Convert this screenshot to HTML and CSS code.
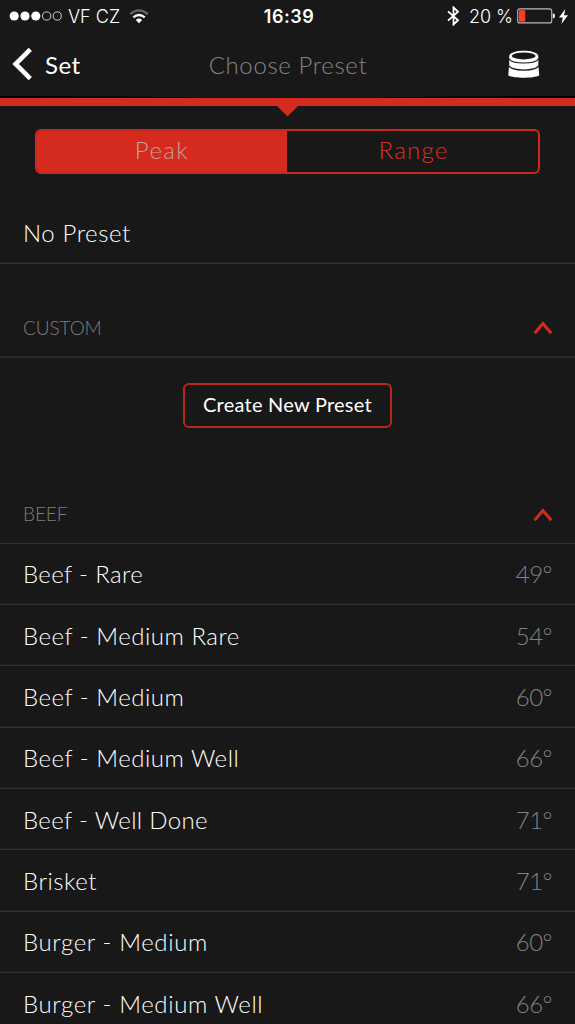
FILE: index.html
```html
<!DOCTYPE html>
<html lang="en">
<head>
<meta charset="utf-8">
<title>Choose Preset</title>
<link rel="stylesheet" href="styles.css">
</head>
<body>
<div class="screen">
  <header class="top">
    <div class="status">
      <div class="status-left">
        <svg class="signal" width="54" height="12" viewBox="0 0 54 12">
          <g fill="#fff"><circle cx="5.2" cy="6" r="4.6"/><circle cx="16" cy="6" r="4.6"/><circle cx="26.8" cy="6" r="4.6"/></g>
          <g fill="none" stroke="#ddd" stroke-width="0.9"><circle cx="37.6" cy="6" r="4.1"/><circle cx="48.2" cy="6" r="4.1"/></g>
        </svg>
        <span class="carrier">VF CZ</span>
        <svg class="wifi" width="20" height="15" viewBox="0 0 20 15">
          <path d="M1.2 5.2Q10 -2.4 18.8 5.2" fill="none" stroke="#666" stroke-width="2.3"/>
          <path d="M4.3 8.4Q10 3.6 15.7 8.4" fill="none" stroke="#fff" stroke-width="2.3"/>
          <path d="M6.8 10.9Q10 8 13.2 10.9L10 14.3Z" fill="#fff"/>
        </svg>
      </div>
      <div class="clock">16:39</div>
      <div class="status-right">
        <svg width="13" height="20" viewBox="0 0 13 20"><path d="M1 5.4L11 14.2L6.5 18.5V1.4L11 5.8L1 14.6" fill="none" stroke="#fff" stroke-width="1.8"/></svg>
        <span class="percent">20 %</span>
        <svg class="battery" width="38" height="16" viewBox="0 0 38 16">
          <rect x="0.7" y="0.9" width="34" height="14" rx="2" fill="none" stroke="#bbb" stroke-width="1.1"/>
          <rect x="2" y="2.2" width="6.2" height="11.4" fill="#ff3b2f"/>
          <path d="M35.8 5.3Q38 5.6 38 8T35.8 10.6Z" fill="#fff"/>
        </svg>
        <svg width="9" height="15" viewBox="0 0 9 15"><path d="M6.3 0L0 8.6H3.8L2.4 15L9 6.2H5Z" fill="#fff"/></svg>
      </div>
    </div>
    <nav class="nav">
      <div class="back">
        <svg width="20" height="34" viewBox="0 0 20 34"><path d="M18.3 2.3L3.6 17L18.3 31.7" fill="none" stroke="#fff" stroke-width="4.6"/></svg>
        <span class="back-label">Set</span>
      </div>
      <h1 class="title">Choose Preset</h1>
      <svg class="probe" width="32" height="28" viewBox="0 0 32 28">
        <path d="M1.2 6.2C1.2-1.2 30.3-1.2 30.3 6.2V17.5H30.6L31.2 25.4C25 28.4 6 28.4 0.3 25.4L0.9 17.5H1.2Z" fill="#fff"/>
        <ellipse cx="15.7" cy="5.9" rx="12" ry="3.5" fill="#181818"/>
        <path d="M1 8.8C4 14.4 27.5 14.4 30.5 8.8M1 15.9C4 21.4 27.5 21.4 30.5 15.9" fill="none" stroke="#181818" stroke-width="1.2"/>
      </svg>
    </nav>
    <div class="edge"><i></i><i></i></div>
    <div class="bar"><svg class="notch" width="24" height="12" viewBox="0 0 24 12"><path d="M0 0H23L12 11H11Z" fill="#d52b1e"/></svg></div>
  </header>

  <main>
    <div class="segment">
      <button class="seg seg-on"><span class="peak">Peak</span></button>
      <button class="seg"><span class="range">Range</span></button>
    </div>
    <div class="row none"><span class="none-label">No Preset</span></div>
    <div class="section custom"><span class="custom-label">CUSTOM</span>
      <svg class="chev" width="20" height="14" viewBox="0 0 20 14"><path d="M1.6 12.3L9.9 2.6L18.2 12.3" fill="none" stroke="#d52b1e" stroke-width="3"/></svg></div>
    <div class="create-area"><button class="create">Create New Preset</button></div>
    <div class="section beef"><span class="beef-label">BEEF</span>
      <svg class="chev" width="20" height="14" viewBox="0 0 20 14"><path d="M1.6 12.3L9.9 2.6L18.2 12.3" fill="none" stroke="#d52b1e" stroke-width="3"/></svg></div>
    <div class="list">
      <div class="row"><span class="snug">Beef - Rare</span><span class="temp">49°</span></div>
      <div class="row"><span>Beef - Medium Rare</span><span class="temp">54°</span></div>
      <div class="row"><span>Beef - Medium</span><span class="temp">60°</span></div>
      <div class="row"><span>Beef - Medium Well</span><span class="temp">66°</span></div>
      <div class="row"><span class="snug">Beef - Well Done</span><span class="temp">71°</span></div>
      <div class="row"><span>Brisket</span><span class="temp">71°</span></div>
      <div class="row"><span class="loose">Burger - Medium</span><span class="temp">60°</span></div>
      <div class="row"><span class="loose">Burger - Medium Well</span><span class="temp">66°</span></div>
    </div>
  </main>
</div>
</body>
</html>
```
FILE: styles.css
```css
* { box-sizing: border-box; }
body { margin: 0; background: #181818; }
svg { display: block; flex: none; }
button { margin: 0; padding: 0; background: none; border: 0; font: inherit; color: inherit; }
.screen { width: 575px; height: 1024px; overflow: hidden; background: #181818; color: #fff; font-family: Lato, "Open Sans", sans-serif; font-weight: 300; font-size: 24px; letter-spacing: 0.52px; white-space: nowrap; }

.status { display: grid; grid-template-columns: 1fr auto 1fr; align-items: center; height: 32px; padding: 0 7px 0 9px; font-family: Inter, "Liberation Sans", sans-serif; font-weight: 400; font-size: 18px; letter-spacing: 0; color: #fff; }
.status-left, .status-right { display: flex; align-items: center; }
.carrier { margin-left: 5px; font-weight: 300; }
.wifi { margin-left: 9px; }
.clock { margin-left: 1px; font-weight: 600; letter-spacing: 0.5px; }
.status-right { justify-content: flex-end; }
.percent { margin: 0 4px 0 9px; font-weight: 300; }
.battery { margin-right: 4px; }

.nav { display: grid; grid-template-columns: 1fr auto 1fr; align-items: center; height: 64px; padding: 0 35px 0 12px; }
.back { display: flex; align-items: center; gap: 13px; }
.back-label { font-weight: 400; color: #fff; }
.title { margin: 0 0 0 24px; font-size: 24px; font-weight: 300; letter-spacing: 0.65px; color: #858585; }
.probe { justify-self: end; }
.edge { display: flex; justify-content: space-between; height: 2px; }
.edge i { width: 196px; background: #000; border-radius: 0 100% 0 0; }
.edge i:last-child { border-radius: 100% 0 0 0; }
.bar { display: flex; justify-content: center; height: 8px; background: #d52b1e; }
.notch { margin-top: 7px; }

.segment { display: flex; width: 505px; height: 45px; margin: 23px 0 0 35px; border: 2px solid #c9291d; border-radius: 6px; overflow: hidden; color: #e02d20; }
.seg { flex: 1; padding: 0 0 4px 2px; letter-spacing: 1.2px; }
.seg-on { flex: 0 0 250px; padding-left: 0; background: #d52b1e; color: #c5a19b; letter-spacing: 1.4px; }

.row { display: flex; justify-content: space-between; align-items: center; height: 61.33px; padding: 0 23px; border-bottom: 1px solid #323232; box-shadow: inset 0 -1px #202020; }
.snug { letter-spacing: 0.37px; }
.loose { letter-spacing: 0.62px; }
.none { margin-top: 28.5px; letter-spacing: 0.6px; }
.section { display: flex; justify-content: space-between; align-items: center; height: 61px; padding: 2px 22px 0 23px; border-bottom: 2px solid #2a2a2a; color: #7e7e7e; font-size: 19px; letter-spacing: -0.1px; }
.custom { margin-top: 33px; }
.beef { border-bottom: 1px solid #323232; }
.chev { margin-top: 2px; }
.create-area { display: flex; justify-content: center; padding: 25px 0 55px; }
.create { width: 209px; height: 45px; padding-bottom: 2px; border: 2px solid #b9271c; border-radius: 6px; font-size: 20px; font-weight: 400; letter-spacing: 0.24px; color: #fff; }
.temp { color: #828282; letter-spacing: -0.5px; }
```
